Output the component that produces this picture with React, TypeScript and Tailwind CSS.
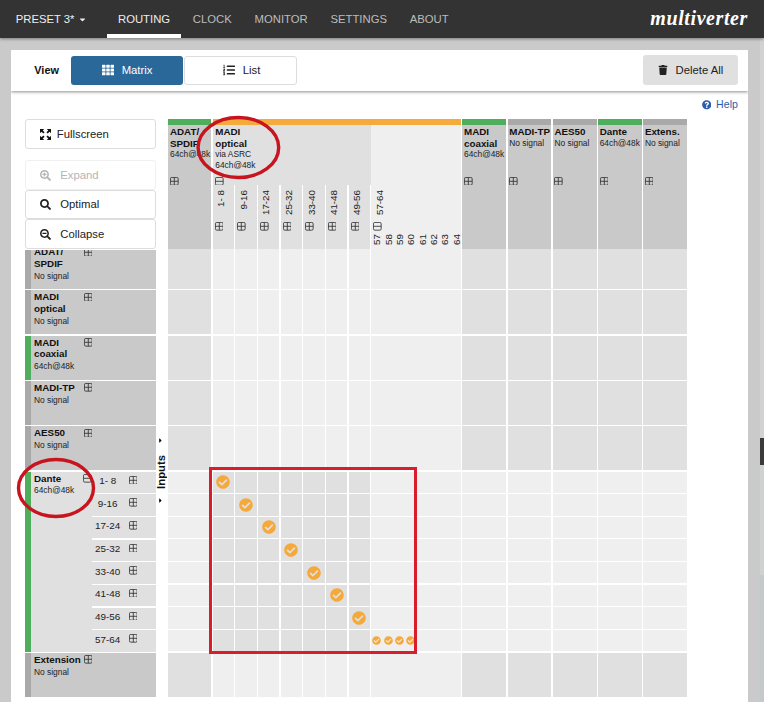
import React from "react";
import {
  FaTh,
  FaListOl,
  FaTrash,
  FaQuestionCircle,
  FaSearchPlus,
  FaSearch,
  FaSearchMinus,
  FaCaretDown,
  FaCaretRight,
  FaCheckCircle,
} from "react-icons/fa";

const MATRIX_COLS =
  "grid grid-cols-[43.2px_repeat(7,21.33px)_89.6px_repeat(5,43.9px)] gap-x-[1.33px]";

function Box({ minus = false }: { minus?: boolean }) {
  return (
    <svg viewBox="0 0 10 10" className="block w-[8.6px] h-[8.6px] shrink-0" fill="none" stroke="#333" strokeWidth="1">
      <rect x="0.5" y="0.5" width="9" height="9" rx="1.6" />
      <line x1="0.5" y1="5" x2="9.5" y2="5" />
      {!minus && <line x1="5" y1="0.5" x2="5" y2="9.5" />}
    </svg>
  );
}

function ExpandIcon() {
  return (
    <svg viewBox="0 0 12 12" className="block w-[11px] h-[11px] shrink-0" fill="#111">
      <polygon points="0,0 4.6,0 3,1.6 5,3.6 3.6,5 1.6,3 0,4.6" />
      <polygon points="12,0 7.4,0 9,1.6 7,3.6 8.4,5 10.4,3 12,4.6" />
      <polygon points="0,12 4.6,12 3,10.4 5,8.4 3.6,7 1.6,9 0,7.4" />
      <polygon points="12,12 7.4,12 9,10.4 7,8.4 8.4,7 10.4,9 12,7.4" />
    </svg>
  );
}

function NavItem({ label, active = false }: { label: string; active?: boolean }) {
  return (
    <div
      className={`h-full flex items-center px-[11.4px] border-b-[4px] pt-[4px] ${
        active ? "border-white text-[#eeeeee]" : "border-transparent text-[#bcbcbc]"
      }`}
    >
      {label}
    </div>
  );
}

function SideButton({
  icon,
  label,
  muted = false,
  gap,
}: {
  icon: React.ReactNode;
  label: string;
  muted?: boolean;
  gap: string;
}) {
  return (
    <div
      className={`h-[29.5px] w-[131px] bg-white border rounded-[3px] flex items-center pl-[14px] text-[11.3px] ${gap} ${
        muted ? "border-[#f0f0f0] text-[#b4b4b4]" : "border-[#dddddd] text-[#222222]"
      }`}
    >
      {icon}
      <span>{label}</span>
    </div>
  );
}

const inputRows: { name: React.ReactNode; sub: string; green?: boolean; clip?: boolean }[] = [
  { name: <>ADAT/<br />SPDIF</>, sub: "No signal", clip: true },
  { name: <>MADI<br />optical</>, sub: "No signal" },
  { name: <>MADI<br />coaxial</>, sub: "64ch@48k", green: true },
  { name: "MADI-TP", sub: "No signal" },
  { name: "AES50", sub: "No signal" },
];

function RowLabel({ name, sub, green, clip }: { name: React.ReactNode; sub: string; green?: boolean; clip?: boolean }) {
  return (
    <div className={`flex overflow-hidden bg-[#c9c9c9] ${clip ? "h-[39.4px]" : "h-[44px]"}`}>
      <div className={`w-[5.4px] shrink-0 ${green ? "bg-[#4fae5c]" : "bg-[#a9a9a9]"}`} />
      <div className={`pl-[3.3px] flex items-start ${clip ? "-mt-[4.3px]" : ""}`}>
        <div className="w-[49.6px] pt-[1.2px]">
          <div className="font-bold text-[9.8px] leading-[11.6px] text-[#111111]">{name}</div>
          <div className="text-[8.4px] leading-[12px] text-[#222222]">{sub}</div>
        </div>
        <div className="pt-[2.4px]">
          <Box />
        </div>
      </div>
    </div>
  );
}

const subLabels = ["1- 8", "9-16", "17-24", "25-32", "33-40", "41-48", "49-56", "57-64"];

const outputHeads: { name: React.ReactNode; sub: string; green?: boolean }[] = [
  { name: <>MADI<br />coaxial</>, sub: "64ch@48k", green: true },
  { name: "MADI-TP", sub: "No signal" },
  { name: "AES50", sub: "No signal" },
  { name: "Dante", sub: "64ch@48k", green: true },
  { name: "Extens.", sub: "No signal" },
];

function HeadText({ name, sub, sub2, minus }: { name: React.ReactNode; sub: string; sub2?: string; minus?: boolean }) {
  return (
    <div className="pl-[1.7px]">
      <div className="h-[52.2px] pt-[1.4px]">
        <div className="font-bold text-[9.8px] leading-[11.6px] text-[#111111] whitespace-nowrap">{name}</div>
        <div className="text-[8.4px] leading-[11.8px] text-[#222222] whitespace-nowrap">{sub}</div>
        {sub2 && <div className="text-[8.4px] leading-[9px] text-[#222222] whitespace-nowrap">{sub2}</div>}
      </div>
      <Box minus={minus} />
    </div>
  );
}

function HeadColumn({ name, sub, green }: { name: React.ReactNode; sub: string; green?: boolean }) {
  return (
    <div className="bg-[#c9c9c9] flex flex-col">
      <div className={`h-[6px] ${green ? "bg-[#4fae5c]" : "bg-[#a9a9a9]"}`} />
      <HeadText name={name} sub={sub} />
    </div>
  );
}

function Vertical({ children }: { children: React.ReactNode }) {
  return (
    <div className="[writing-mode:vertical-rl] rotate-180 text-[9.8px] leading-[12px] text-[#222222] whitespace-nowrap">
      {children}
    </div>
  );
}

function Cell({ dark, children }: { dark: boolean; children?: React.ReactNode }) {
  return <div className={`flex items-center ${dark ? "bg-[#e0e0e0]" : "bg-[#efefef]"}`}>{children}</div>;
}

function MatrixRow({ h }: { h: string }) {
  return (
    <div className={`${MATRIX_COLS} ${h}`}>
      {Array.from({ length: 14 }).map((_, i) => (
        <Cell key={i} dark={i === 0 || i > 8 ? true : false} />
      ))}
    </div>
  );
}

function DanteRow({ index }: { index: number }) {
  return (
    <div className={`${MATRIX_COLS} h-[21.33px]`}>
      {Array.from({ length: 14 }).map((_, i) => (
        <Cell key={i} dark={i >= 1 && i <= 7}>
          {i === index + 1 && i <= 7 && (
            <div className="w-full flex justify-center">
              <FaCheckCircle className="w-[14px] h-[14px] text-[#f5a93b]" />
            </div>
          )}
          {index === 7 && i === 8 && (
            <div className="flex pl-[0.9px] gap-x-[2.33px]">
              {[0, 1, 2, 3].map((k) => (
                <FaCheckCircle key={k} className="w-[9px] h-[9px] text-[#f5a93b]" />
              ))}
            </div>
          )}
        </Cell>
      ))}
    </div>
  );
}

export default function App() {
  return (
    <div className="relative w-[764px] h-[703px] overflow-hidden bg-white font-['Liberation_Sans',Arial,sans-serif]">
      <div className="h-[702px] flex flex-col bg-[#cacaca]">
        {/* top navigation */}
        <header className="relative z-10 h-[38px] shrink-0 bg-[#333333] shadow-[0_1px_3px_rgba(0,0,0,0.4)] flex items-center text-[11.3px]">
          <div className="pl-[15.7px] pr-[8.6px] flex items-center text-[#eeeeee] pt-[1px]">
            <span>PRESET 3*</span>
            <FaCaretDown className="ml-[3px] w-[9px] h-[9px]" />
          </div>
          <div className="ml-[11.5px] h-full flex">
            <NavItem label="ROUTING" active />
            <NavItem label="CLOCK" />
            <NavItem label="MONITOR" />
            <NavItem label="SETTINGS" />
            <NavItem label="ABOUT" />
          </div>
          <div className="ml-auto pr-[16px] -mt-[2px] text-white font-['Liberation_Serif',serif] italic font-bold text-[20px] leading-none tracking-[0.6px]">
            multiverter
          </div>
        </header>

        <div className="flex-1 min-h-0 flex pl-[11px]">
          <main className="w-[737.3px] mt-[12px] bg-white flex flex-col overflow-hidden">
            {/* toolbar */}
            <div className="h-[40.5px] shrink-0 bg-white shadow-[0_1px_3px_rgba(0,0,0,0.45)] flex items-center pl-[23.3px] pr-[10.4px]">
              <span className="font-bold text-[10.9px] text-[#111111] w-[37px]">View</span>
              <div className="flex gap-x-[1px]">
                <div className="w-[112px] h-[29px] rounded-[3px] bg-[#2a6899] text-white flex items-center justify-center gap-x-[7.5px] text-[11.3px]">
                  <FaTh className="w-[12px] h-[12px]" />
                  <span>Matrix</span>
                </div>
                <div className="w-[112.5px] h-[29px] rounded-[3px] bg-white border border-[#dddddd] text-[#222222] flex items-center justify-center gap-x-[8px] pl-[2px] text-[11.3px]">
                  <FaListOl className="w-[12px] h-[12px]" />
                  <span>List</span>
                </div>
              </div>
              <div className="ml-auto w-[95px] h-[30px] rounded-[3px] bg-[#e0e0e0] text-[#222222] flex items-center justify-center gap-x-[8px] text-[11.3px]">
                <FaTrash className="w-[10px] h-[10px]" />
                <span>Delete All</span>
              </div>
            </div>

            {/* help */}
            <div className="h-[28.2px] shrink-0 flex items-center justify-end pr-[10.4px] pt-[0.6px] text-[10.6px] text-[#2d5cab] gap-x-[5px]">
              <FaQuestionCircle className="w-[9.5px] h-[9.5px]" />
              <span>Help</span>
            </div>

            {/* matrix */}
            <div className="flex pl-[14.3px]">
              <div className="w-[130.3px] shrink-0 flex flex-col">
                <div className="pt-[0.6px] flex flex-col">
                  <SideButton icon={<ExpandIcon />} label="Fullscreen" gap="gap-x-[5.5px]" />
                  <div className="h-[11.5px]" />
                  <SideButton
                    muted
                    icon={<FaSearchPlus className="w-[11px] h-[11px]" />}
                    label="Expand"
                    gap="gap-x-[9px]"
                  />
                  <SideButton
                    icon={<FaSearch className="w-[11px] h-[11px]" />}
                    label="Optimal"
                    gap="gap-x-[9px]"
                  />
                  <SideButton
                    icon={<FaSearchMinus className="w-[11px] h-[11px]" />}
                    label="Collapse"
                    gap="gap-x-[9px]"
                  />
                </div>
                <div className="mt-[0.8px] flex flex-col gap-y-[1.33px]">
                  {inputRows.map((r, i) => (
                    <RowLabel key={i} {...r} />
                  ))}
                  <div className="h-[180px] flex bg-[#e0e0e0]">
                    <div className="w-[5.4px] shrink-0 bg-[#4fae5c]" />
                    <div className="w-[61px] shrink-0 pl-[3.3px] flex items-start">
                      <div className="w-[49.6px] pt-[1.2px]">
                        <div className="font-bold text-[9.8px] leading-[11.6px] text-[#111111]">Dante</div>
                        <div className="text-[8.4px] leading-[12px] text-[#222222]">64ch@48k</div>
                      </div>
                      <div className="pt-[2.4px]">
                        <Box minus />
                      </div>
                    </div>
                    <div className="flex-1 flex flex-col gap-y-[1.33px] bg-white">
                      {subLabels.map((s) => (
                        <div key={s} className="h-[21.33px] bg-[#e0e0e0] flex items-start pt-[3.4px]">
                          <span className="w-[32px] text-center text-[9.9px] leading-[11px] text-[#222222]">{s}</span>
                          <span className="pl-[5px] pt-[0.6px]">
                            <Box />
                          </span>
                        </div>
                      ))}
                    </div>
                  </div>
                  <RowLabel name="Extension" sub="No signal" />
                </div>
              </div>

              {/* inputs marker */}
              <div className="w-[12.7px] shrink-0 flex flex-col items-center pr-[2.5px] pt-[318px]">
                <FaCaretRight className="w-[7px] h-[7px] text-black" />
                <div className="mt-[11px] [writing-mode:vertical-rl] rotate-180 font-bold text-[11.3px] leading-[12px] text-[#111111]">
                  Inputs
                </div>
                <div className="mt-[8px]">
                  <FaCaretRight className="w-[7px] h-[7px] text-black" />
                </div>
              </div>

              <div className="flex flex-col">
                {/* header */}
                <div className={`${MATRIX_COLS} h-[130.8px]`}>
                  <HeadColumn name={<>ADAT/<br />SPDIF</>} sub="64ch@48k" green />
                  <div className="col-span-8 flex flex-col">
                    <div className="h-[6px] bg-[#f5ab3c]" />
                    <div className="flex h-[60.8px]">
                      <div className="w-[158.64px] bg-[#e0e0e0] pl-[0.8px]">
                        <HeadText name={<>MADI<br />optical</>} sub="via ASRC" sub2="64ch@48k" minus />
                      </div>
                      <div className="flex-1 bg-[#efefef]" />
                    </div>
                    <div className="flex-1 grid grid-cols-[repeat(7,21.33px)_89.6px] gap-x-[1.33px]">
                      {subLabels.slice(0, 7).map((s) => (
                        <div key={s} className="bg-[#e0e0e0] flex flex-col pl-[1.8px] pt-[4.2px]">
                          <div className="h-[32.3px] pl-[0.4px]">
                            <Vertical>{s}</Vertical>
                          </div>
                          <Box />
                        </div>
                      ))}
                      <div className="bg-[#efefef] flex flex-col pl-[1.8px] pt-[4.2px]">
                        <div className="h-[32.3px] pl-[0.4px]">
                          <Vertical>57-64</Vertical>
                        </div>
                        <Box minus />
                        <div className="flex mt-[3.6px] -ml-[1.4px]">
                          {[57, 58, 59, 60, 61, 62, 63, 64].map((n) => (
                            <div key={n} className="w-[11.33px] flex justify-center">
                              <Vertical>{n}</Vertical>
                            </div>
                          ))}
                        </div>
                      </div>
                    </div>
                  </div>
                  {outputHeads.map((h, i) => (
                    <HeadColumn key={i} {...h} />
                  ))}
                </div>

                {/* body */}
                <div className="flex flex-col gap-y-[1.33px]">
                  <MatrixRow h="h-[39.4px]" />
                  <MatrixRow h="h-[44px]" />
                  <MatrixRow h="h-[44px]" />
                  <MatrixRow h="h-[44px]" />
                  <MatrixRow h="h-[44px]" />
                  <div className="flex flex-col gap-y-[1.33px]">
                    {subLabels.map((_, i) => (
                      <DanteRow key={i} index={i} />
                    ))}
                  </div>
                  <MatrixRow h="h-[44px]" />
                </div>
              </div>
            </div>
          </main>

          {/* window behind */}
          <div className="flex-1 flex justify-end">
            <div className="w-[4px] flex flex-col">
              <div className="h-[400px] bg-[#d2d2d2]" />
              <div className="h-[27px] bg-[#3a3a3a]" />
              <div className="h-[110px] bg-[#cfd2d3]" />
              <div className="flex-1 bg-[#c4cacc]" />
            </div>
          </div>
        </div>
      </div>

      {/* red annotations drawn over the screenshot */}
      <div className="absolute left-[208.5px] top-[466.8px] w-[208px] h-[187.4px] border-[3px] border-[#d81e2c] pointer-events-none" />
      <svg className="absolute left-0 top-0 w-[764px] h-[703px] pointer-events-none" viewBox="0 0 764 703" fill="none">
        <ellipse cx="238.4" cy="147.5" rx="40.3" ry="30" stroke="#c8141f" strokeWidth="3.4" />
        <ellipse cx="56" cy="488" rx="37.5" ry="28.5" stroke="#c8141f" strokeWidth="3.4" />
      </svg>
    </div>
  );
}
